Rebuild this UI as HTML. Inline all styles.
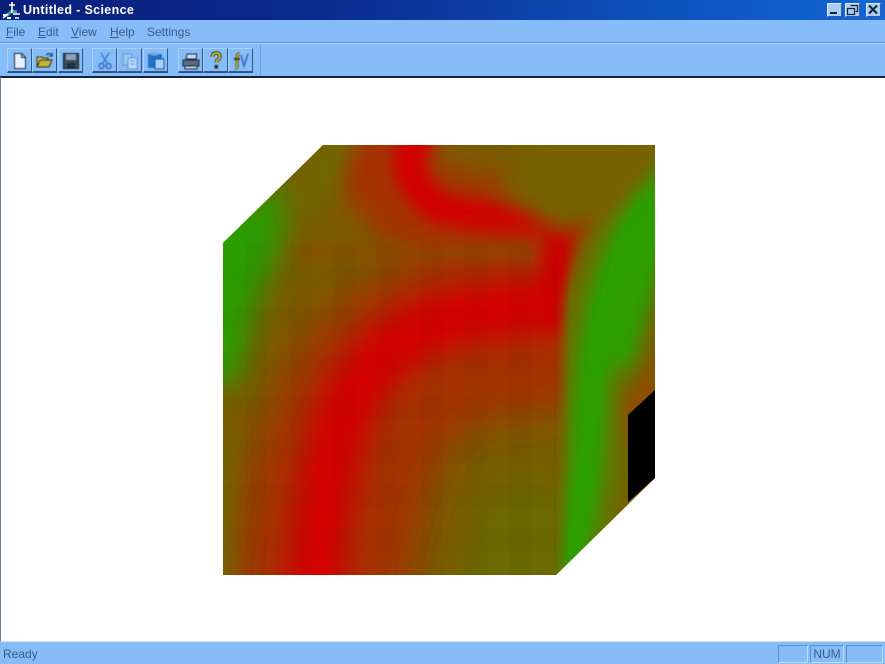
<!DOCTYPE html>
<html>
<head>
<meta charset="utf-8">
<title>Untitled - Science</title>
<style>
html,body{margin:0;padding:0;}
body{width:885px;height:664px;position:relative;overflow:hidden;background:#86bcf8;font-family:"Liberation Sans",sans-serif;font-size:12px;color:#27456f;}
#title{position:absolute;left:0;top:0;width:885px;height:20px;background:linear-gradient(90deg,#0a1f7c 0,#0a2a8e 35%,#0d52bd 75%,#1266d6 100%);}
#title span{position:absolute;left:23px;top:3px;color:#fff;font-weight:bold;font-size:12.5px;letter-spacing:.35px;}
.wb{position:absolute;top:3px;width:15px;height:14px;background:#a9cdf7;border-top:1px solid #dcecff;border-left:1px solid #dcecff;border-right:1px solid #3a5a92;border-bottom:1px solid #3a5a92;box-sizing:border-box;}
.m{position:absolute;top:25px;color:#3a5b88;font-size:12px;filter:blur(.3px);}
.m u{text-decoration:underline;}
#sep1{position:absolute;left:0;top:42px;width:885px;height:1px;background:#5f97d8;}
#sep1b{position:absolute;left:0;top:43px;width:885px;height:1px;background:#a6d0fb;}
#sep2{position:absolute;left:260px;top:44px;width:1px;height:32px;background:#6ea3e0;}
.b{position:absolute;top:48px;width:25px;height:25px;box-sizing:border-box;border-top:1px solid #a8d0fc;border-left:1px solid #a8d0fc;border-right:1px solid #33568a;border-bottom:2px solid #33568a;}
.b svg{position:absolute;left:2px;top:2px;filter:blur(.4px);}
#client{position:absolute;left:0;top:76px;width:885px;height:566px;background:#fff;box-sizing:border-box;border-top:2px solid #14243c;border-left:1px solid #6d8098;border-bottom:1px solid #cfe3fb;}
#cube{position:absolute;left:0;top:0;}
#status{position:absolute;left:0;top:642px;width:885px;height:22px;background:#86bcf8;}
#status .t{position:absolute;left:3px;top:5px;color:#3a5b88;}
.p{position:absolute;top:3px;height:18px;box-sizing:border-box;border-top:1px solid #5f8fc8;border-left:1px solid #5f8fc8;border-right:1px solid #c0dcfc;border-bottom:1px solid #c0dcfc;text-align:center;color:#3a5b88;line-height:16px;}
</style>
</head>
<body>
<div id="title">
<svg style="position:absolute;left:1px;top:1px;filter:blur(.3px)" width="21" height="19" viewBox="0 0 21 19">
<path d="M5 15l6-5 5 1" stroke="#3aa89a" stroke-width="3" fill="none"/>
<path d="M11 1v11M8 4h6M2 17l5-4M12 13h7M14 17h4" stroke="#fff" stroke-width="1.600" fill="none"/>
<path d="M2 13h4v2H2zM6 16h4v2H6z" fill="#dff"/>
</svg>
<span>Untitled - Science</span>
<div class="wb" style="left:827px"><svg width="13" height="12"><rect x="2" y="8" width="7" height="2" fill="#123"/></svg></div>
<div class="wb" style="left:845px"><svg width="13" height="12"><path d="M4.500 1.500h7v6h-2M1.500 4.500h7v6h-7z" fill="none" stroke="#123" stroke-width="1.200"/></svg></div>
<div class="wb" style="left:866px"><svg width="13" height="12"><path d="M2 1.500l8 8M10 1.500l-8 8" stroke="#123" stroke-width="2"/></svg></div>
</div>

<div class="m" style="left:6px"><u>F</u>ile</div>
<div class="m" style="left:38px"><u>E</u>dit</div>
<div class="m" style="left:71px"><u>V</u>iew</div>
<div class="m" style="left:110px"><u>H</u>elp</div>
<div class="m" style="left:147px">Settings</div>
<div id="sep1"></div><div id="sep1b"></div><div id="sep2"></div>

<div class="b" style="left:7px"><svg width="20" height="20"><path d="M4.500 2.500h7l4 4v11h-11z" fill="#e8f2fe" stroke="#1b2c44"/><path d="M11.500 2.500v4h4" fill="none" stroke="#1b2c44"/></svg></div>
<div class="b" style="left:32px"><svg width="20" height="20"><path d="M2 15V6h5l1 1h5v2" fill="#d8c85a" stroke="#2c2c14"/><path d="M2 16l3-7h12l-3 7z" fill="#c9b23a" stroke="#2c2c14"/><path d="M11 4q3-3 6 0M17 2v3h-3" fill="none" stroke="#1b2c44"/></svg></div>
<div class="b" style="left:58px"><svg width="20" height="20"><rect x="2.500" y="2.500" width="15" height="15" fill="#3c4a5a" stroke="#14202e"/><rect x="5" y="3" width="10" height="6" fill="#8fa2b8"/><rect x="6" y="12" width="8" height="5" fill="#26303c"/></svg></div>
<div class="b" style="left:92px"><svg width="20" height="20"><path d="M6 2l6 10M14 2L8 12" stroke="#3f7fd0" stroke-width="1.500"/><circle cx="6.500" cy="15" r="2.500" fill="none" stroke="#2a6cc0" stroke-width="1.400"/><circle cx="13.500" cy="15" r="2.500" fill="none" stroke="#2a6cc0" stroke-width="1.400"/></svg></div>
<div class="b" style="left:117px"><svg width="20" height="20"><rect x="3" y="3" width="9" height="11" fill="#9fc8f0" stroke="#5f96d6"/><rect x="8" y="7" width="9" height="11" fill="#bcdcfa" stroke="#5f96d6"/><path d="M10 10h5M10 13h5" stroke="#5f96d6"/></svg></div>
<div class="b" style="left:143px"><svg width="20" height="20"><rect x="2" y="3" width="14" height="14" rx="1" fill="#1e72c8"/><rect x="5" y="1.500" width="7" height="3" fill="#7fa8d4"/><rect x="9" y="8" width="9" height="10" fill="#a8d0f8" stroke="#1a5aa8"/></svg></div>
<div class="b" style="left:178px"><svg width="20" height="20"><path d="M6 3h10l-1 5H5z" fill="#c8dcf4" stroke="#16263c"/><path d="M2 9h16v6H2z" fill="#5a6a80" stroke="#16263c"/><path d="M4 15h12v3H4z" fill="#c8dcf4" stroke="#16263c"/></svg></div>
<div class="b" style="left:203px"><svg width="20" height="20"><path d="M6.500 6q0-4 3.700-4t3.700 3.800q0 2-2.400 3.200-1 .6-1 2.500" fill="none" stroke="#2a2a14" stroke-width="3.400"/><path d="M6.500 6q0-4 3.700-4t3.700 3.800q0 2-2.400 3.200-1 .6-1 2.500" fill="none" stroke="#e6d83a" stroke-width="1.600"/><rect x="8.500" y="14" width="3.500" height="3.500" fill="#2a2a14"/></svg></div>
<div class="b" style="left:228px"><svg width="20" height="20"><path d="M9 3Q6 3 6 7v8q0 2-2 2" fill="none" stroke="#2a2a14" stroke-width="3"/><path d="M9 3Q6 3 6 7v8q0 2-2 2" fill="none" stroke="#e6d024" stroke-width="1.500"/><path d="M3 8h6" stroke="#2a2a14" stroke-width="1.600"/><path d="M10 4l3 11 4-12" fill="none" stroke="#2a5cb0" stroke-width="1.300"/></svg></div>

<div id="client"></div>

<svg id="cube" width="885" height="664" viewBox="0 0 885 664">
<defs>
<clipPath id="hex"><path d="M223 243L323 145H655V478L556 575H223z"/></clipPath>
<filter id="b30" filterUnits="userSpaceOnUse" x="100" y="50" width="700" height="650"><feGaussianBlur stdDeviation="28"/></filter>
<filter id="b20" filterUnits="userSpaceOnUse" x="100" y="50" width="700" height="650"><feGaussianBlur stdDeviation="20"/></filter>
<filter id="b14" filterUnits="userSpaceOnUse" x="100" y="50" width="700" height="650"><feGaussianBlur stdDeviation="14"/></filter>
<filter id="b10" filterUnits="userSpaceOnUse" x="100" y="50" width="700" height="650"><feGaussianBlur stdDeviation="10"/></filter>
<filter id="b7" filterUnits="userSpaceOnUse" x="100" y="50" width="700" height="650"><feGaussianBlur stdDeviation="7"/></filter>
<linearGradient id="fade" gradientUnits="userSpaceOnUse" x1="554" y1="0" x2="570" y2="0"><stop offset="0" stop-color="#000"/><stop offset="1" stop-color="#fff"/></linearGradient>
<mask id="rm" maskUnits="userSpaceOnUse" x="500" y="100" width="200" height="500"><rect x="500" y="100" width="200" height="500" fill="url(#fade)"/></mask>
<pattern id="vs" patternUnits="userSpaceOnUse" x="223" y="0" width="44" height="10"><rect x="22" width="22" height="10" fill="#000" opacity=".022"/></pattern>
<pattern id="hs" patternUnits="userSpaceOnUse" x="0" y="243" width="10" height="44"><rect y="22" width="10" height="22" fill="#000" opacity=".015"/></pattern>
<clipPath id="fr"><path d="M223 243H556V575H223z"/></clipPath>
</defs>

<g clip-path="url(#hex)">
<rect x="200" y="130" width="470" height="460" fill="#7a5c00"/>

<!-- top face red -->
<path d="M380 110Q372 190 445 218Q510 232 610 226" fill="none" stroke="#a63200" stroke-width="95" filter="url(#b14)"/>
<path d="M425 130Q388 170 440 208Q500 226 590 226" fill="none" stroke="#d20000" stroke-width="32" filter="url(#b7)"/>

<!-- front face red -->
<path d="M318 640Q326 470 378 390Q435 326 510 328L630 305" fill="none" stroke="#a63200" stroke-width="175" filter="url(#b20)"/>
<path d="M312 640Q318 480 350 400Q392 325 470 314L600 298" fill="none" stroke="#d40000" stroke-width="58" filter="url(#b14)"/>

<!-- brown band between top and front -->
<path d="M290 252H535" stroke="#8a4c00" stroke-width="10" fill="none" filter="url(#b7)"/>

<!-- left green -->
<path d="M190 225L290 185 280 250 258 300 238 385H190z" fill="#2a9c00" filter="url(#b14)"/>
<path d="M323 125H365L325 205 290 215z" fill="#6e6800" filter="url(#b10)"/>
<path d="M190 420H230V610H190z" fill="#6f6400" filter="url(#b10)"/>

<!-- bottom right olive -->
<path d="M500 480H570V610H450L480 510z" fill="#6a6a00" filter="url(#b20)"/>
<path d="M545 228H575L568 300 556 330 540 320z" fill="#cc0000" filter="url(#b7)"/>

<!-- mosaic texture -->
<g clip-path="url(#fr)">
<rect x="223" y="243" width="333" height="332" fill="url(#vs)"/>
<rect x="223" y="243" width="333" height="332" fill="url(#hs)"/>
</g>

<!-- right face -->
<g mask="url(#rm)">
<path d="M556 310L590 230 655 150V478L556 575z" fill="#7a5a00" filter="url(#b7)"/>
<path d="M672 150Q628 225 606 300Q590 370 588 440Q585 510 562 585" fill="none" stroke="#5a8000" stroke-width="66" filter="url(#b14)"/>
<path d="M672 155Q628 225 606 300Q590 370 588 440Q585 510 562 585" fill="none" stroke="#2ca000" stroke-width="30" filter="url(#b7)"/>
<path d="M668 185Q640 270 614 365" fill="none" stroke="#2ca000" stroke-width="36" filter="url(#b10)"/>
<path d="M665 350L665 430 628 445 622 400z" fill="#8a5000" filter="url(#b7)"/>
</g>
<path d="M530 130H670V160L600 222 560 232 500 190z" fill="#766200" filter="url(#b10)"/>
</g>
<path d="M628 415L655 390V478L628 502z" fill="#000"/>
</svg>

<div id="status">
<div class="t">Ready</div>
<div class="p" style="left:778px;width:30px"></div>
<div class="p" style="left:810px;width:34px">NUM</div>
<div class="p" style="left:846px;width:37px"></div>
</div>
</body>
</html>
